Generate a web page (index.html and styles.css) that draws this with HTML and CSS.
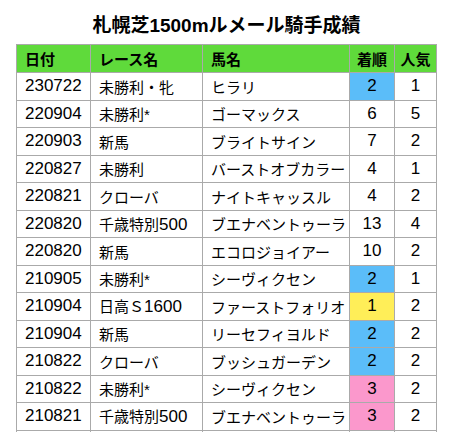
FILE: index.html
```html
<!DOCTYPE html>
<html lang="ja">
<head>
<meta charset="utf-8">
<link rel="stylesheet" href="styles.css">
</head>
<body>
<div class="page">
  <h1 class="title">札幌芝1500mルメール騎手成績</h1>
  <table class="results">
    <colgroup>
      <col class="c-date"><col class="c-race"><col class="c-horse"><col class="c-pos"><col class="c-pop">
    </colgroup>
    <thead>
      <tr><th>日付</th><th>レース名</th><th>馬名</th><th class="ctr">着順</th><th class="ctr">人気</th></tr>
    </thead>
    <tbody>
      <tr><td class="num">230722</td><td>未勝利・牝</td><td>ヒラリ</td><td class="num ctr blue">2</td><td class="num ctr">1</td></tr>
      <tr><td class="num">220904</td><td>未勝利*</td><td>ゴーマックス</td><td class="num ctr">6</td><td class="num ctr">5</td></tr>
      <tr><td class="num">220903</td><td>新馬</td><td>ブライトサイン</td><td class="num ctr">7</td><td class="num ctr">2</td></tr>
      <tr><td class="num">220827</td><td>未勝利</td><td>バーストオブカラー</td><td class="num ctr">4</td><td class="num ctr">1</td></tr>
      <tr><td class="num">220821</td><td>クローバ</td><td>ナイトキャッスル</td><td class="num ctr">4</td><td class="num ctr">2</td></tr>
      <tr><td class="num">220820</td><td>千歳特別<span class="dig">500</span></td><td>ブエナベントゥーラ</td><td class="num ctr">13</td><td class="num ctr">4</td></tr>
      <tr><td class="num">220820</td><td>新馬</td><td>エコロジョイアー</td><td class="num ctr">10</td><td class="num ctr">2</td></tr>
      <tr><td class="num">210905</td><td>未勝利*</td><td>シーヴィクセン</td><td class="num ctr blue">2</td><td class="num ctr">1</td></tr>
      <tr><td class="num">210904</td><td>日高Ｓ<span class="dig">1600</span></td><td>ファーストフォリオ</td><td class="num ctr yellow">1</td><td class="num ctr">2</td></tr>
      <tr><td class="num">210904</td><td>新馬</td><td>リーセフィヨルド</td><td class="num ctr blue">2</td><td class="num ctr">2</td></tr>
      <tr><td class="num">210822</td><td>クローバ</td><td>ブッシュガーデン</td><td class="num ctr blue">2</td><td class="num ctr">2</td></tr>
      <tr><td class="num">210822</td><td>未勝利*</td><td>シーヴィクセン</td><td class="num ctr pink">3</td><td class="num ctr">2</td></tr>
      <tr><td class="num">210821</td><td>千歳特別<span class="dig">500</span></td><td>ブエナベントゥーラ</td><td class="num ctr pink">3</td><td class="num ctr">2</td></tr>
      <tr><td class="num"></td><td></td><td></td><td class="num ctr"></td><td class="num ctr"></td></tr>
    </tbody>
  </table>
</div>
</body>
</html>
```
FILE: styles.css
```css
html, body {
  margin: 0;
  padding: 0;
  background: #ffffff;
}
body {
  font-family: "Liberation Sans", "Noto Sans CJK JP", sans-serif;
  color: #000;
}
.page {
  width: 472px;
  height: 432px;
  overflow: hidden;
  padding-left: 16px;
  box-sizing: border-box;
}
.title {
  margin: 0;
  width: 421px;
  height: 44px;
  box-sizing: border-box;
  padding-top: 14px;
  line-height: 24px;
  font-size: 19px;
  font-weight: bold;
  text-align: center;
}
.results {
  border-collapse: collapse;
  table-layout: fixed;
  width: 421px;
  font-size: 15px;
}
.c-date { width: 74px; }
.c-race { width: 112px; }
.c-horse { width: 147px; }
.c-pos { width: 45px; }
.c-pop { width: 42px; }
.results th,
.results td {
  border: 1px solid #aaaaaa;
  padding: 0 0 0 8px;
  text-align: left;
  white-space: nowrap;
  overflow: hidden;
}
.results th {
  background: #5fda3b;
  font-weight: bold;
  height: 27px;
}
.results td {
  height: 26.5px;
}
.results .num,
.results .dig {
  font-size: 17px;
}
.results .ctr {
  text-align: center;
  padding: 0;
}
.blue { background: #5bbdf9; }
.yellow { background: #ffee58; }
.pink { background: #fb98cc; }
```
